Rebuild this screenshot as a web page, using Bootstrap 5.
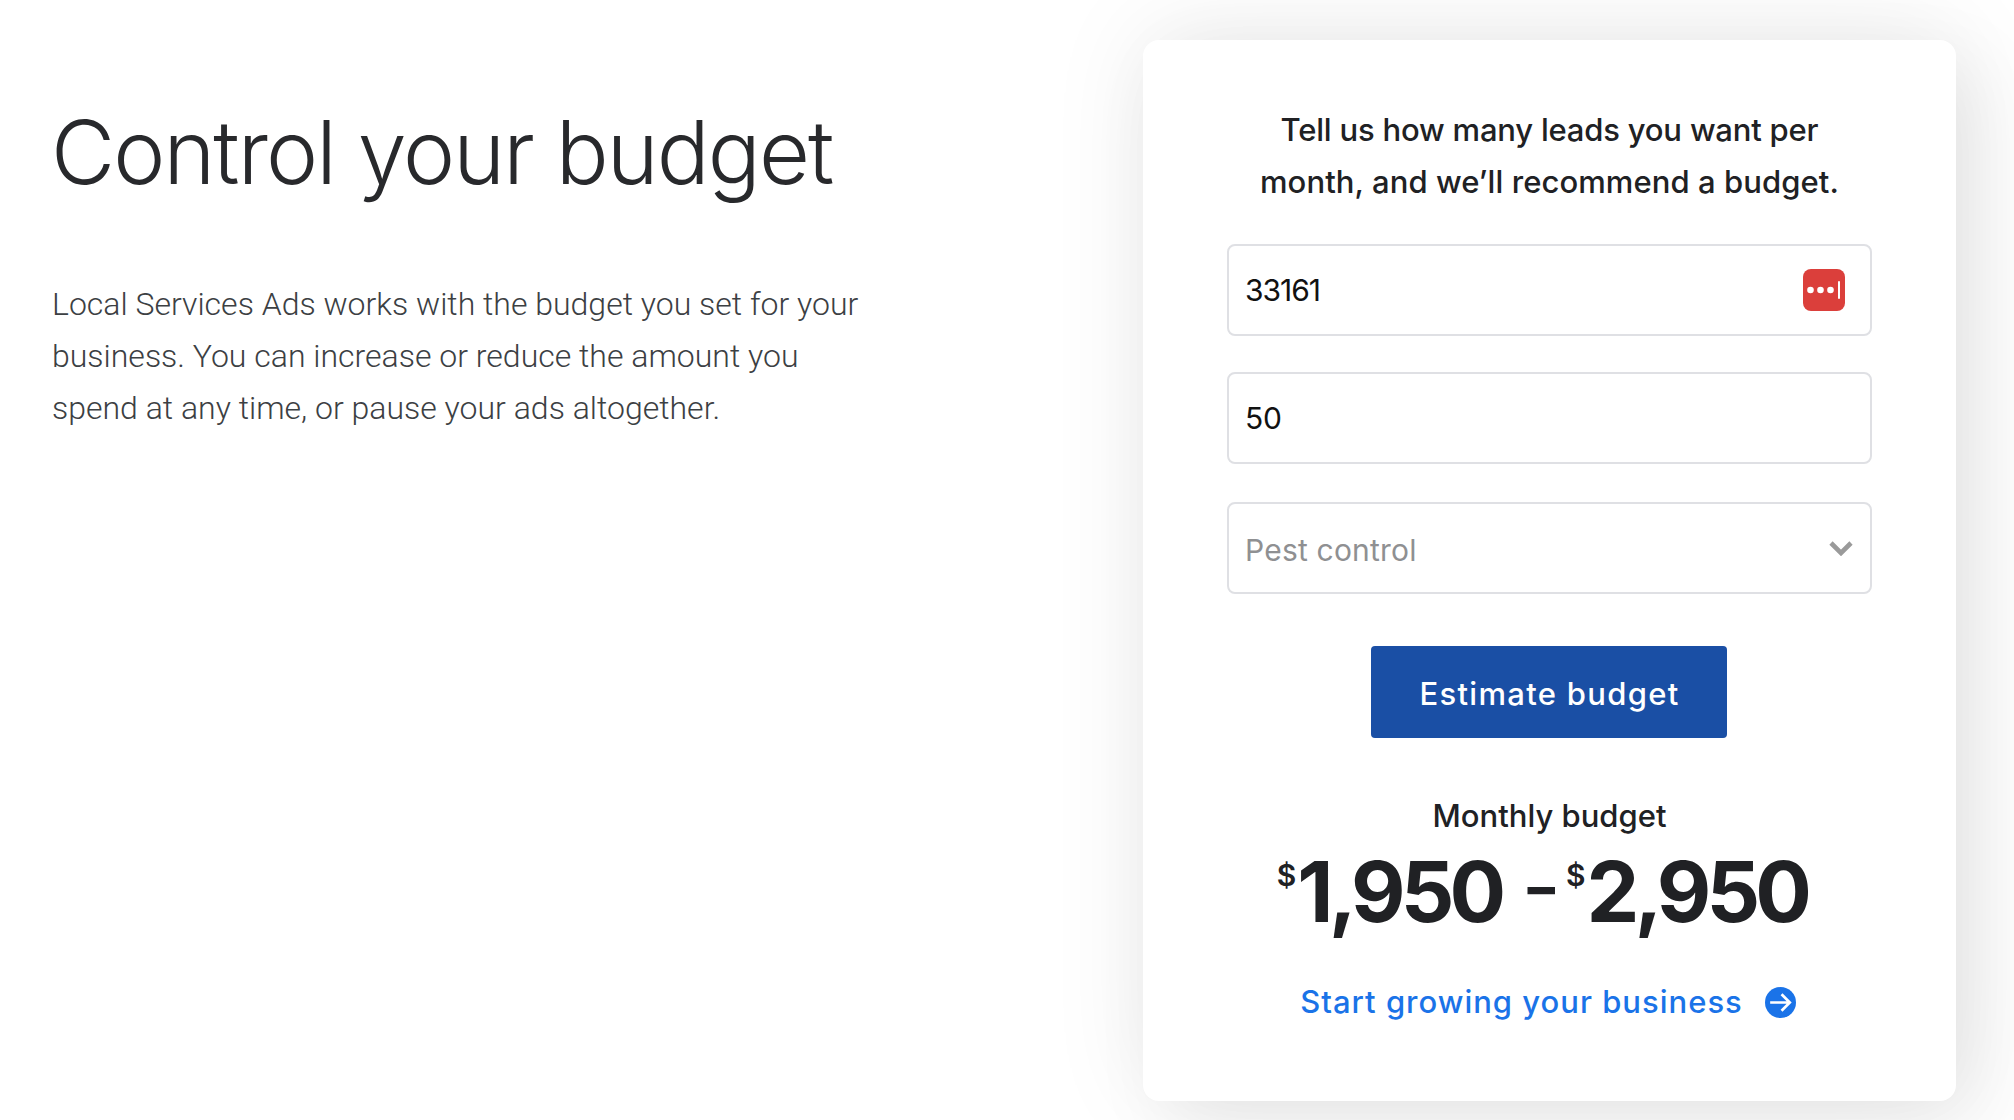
<!doctype html>
<html lang="en">
<head>
<meta charset="utf-8">
<title>Control your budget</title>
<link href="https://cdn.jsdelivr.net/npm/bootstrap@5.3.0/dist/css/bootstrap.min.css" rel="stylesheet">
<style>
html,body{height:1120px;overflow:hidden;background:#fff}
.stage{height:1120px;padding:40px 58px 20px 52px}
.intro{width:1091px;flex:none;padding-top:58px}
.headline{font-family:Inter,sans-serif;font-weight:300;font-size:88px;line-height:108px;color:#28292c;letter-spacing:-1.9px;margin:0 0 72px -1px;white-space:nowrap}
.copy{font-family:Roboto,sans-serif;font-weight:300;font-size:32px;line-height:52px;color:#3c4043;margin:0;width:840px}
.panel{width:813px;height:1061px;border-radius:16px;background:#fff;box-shadow:0 -8px 100px rgba(0,0,0,.08),24px 24px 80px rgba(0,0,0,.07);padding:64px 84px 0;border:0}
.ask{font-family:Inter,sans-serif;font-weight:550;font-size:31px;line-height:52px;color:#202124;text-align:center;letter-spacing:-.2px;margin:0 0 36px}
.ask-second{letter-spacing:.08px}
.field{height:92px;border:2px solid #dfe0e4;border-radius:8px;padding:0 16px;font-family:Inter,sans-serif;font-size:30px;color:#111;letter-spacing:-.3px}
.field-zip{margin-bottom:36px}
.field-qty{margin-bottom:38px}
.zip{letter-spacing:-1px}
.field-last{color:#8f9092;margin-bottom:52px;font-weight:400;letter-spacing:.2px}
.field-last>span{padding-top:5px}
.keybtn{width:42px;height:42px;border-radius:8px;background:#db3f3b;margin-right:9px}
.estimate{width:356px;height:92px;background:#1a4fa5;border:0;border-radius:4px;color:#fff;font-family:Inter,sans-serif;font-weight:500;font-size:31px;letter-spacing:1.3px;padding:4px 0 0 2px;margin-left:-2px}
.estimate:hover{background:#1a4fa5;color:#fff}
.mlabel{font-family:Inter,sans-serif;font-weight:500;font-size:31px;line-height:40px;color:#202124;letter-spacing:0;margin:58px 0 0}
.amount{font-family:Inter,sans-serif;font-weight:700;font-size:84px;line-height:100px;color:#202124;letter-spacing:-4.8px;margin:6px 0 0;padding-right:15px}
.amount sup{font-size:30px;font-weight:600;top:-1.2em;letter-spacing:-1px;margin-right:2px}
.amount .dash{font-size:55px;margin:0 11px 0 26px;font-weight:800;letter-spacing:0;vertical-align:.28em;line-height:0}
.grow{font-family:Inter,sans-serif;font-weight:500;font-size:31px;color:#1a73e8;letter-spacing:1px;text-decoration:none;margin-top:38px;gap:22px;line-height:44px;padding-right:3px}
</style>
</head>
<body>
<main class="stage d-flex">
  <section class="intro">
    <h1 class="headline">Control your budget</h1>
    <p class="copy">Local Services Ads works with the budget you set for your business. You can increase or reduce the amount you spend at any time, or pause your ads altogether.</p>
  </section>
  <section class="panel card">
    <p class="ask">Tell us how many leads you want per<br><span class="ask-second">month, and we’ll recommend a budget.</span></p>
    <div class="field field-zip d-flex align-items-center justify-content-between">
      <span class="zip">33161</span>
      <span class="keybtn d-flex align-items-center justify-content-center">
        <svg width="42" height="42" viewBox="0 0 42 42"><g fill="#fff"><circle cx="7.5" cy="21" r="3.3"/><circle cx="17.5" cy="21" r="3.3"/><circle cx="27.5" cy="21" r="3.3"/><rect x="35" y="12" width="2" height="18" rx="1"/></g></svg>
      </span>
    </div>
    <div class="field field-qty d-flex align-items-center">50</div>
    <div class="field field-last d-flex align-items-center justify-content-between">
      <span>Pest control</span>
      <svg width="26" height="16" viewBox="0 0 26 16"><path d="M3 3l10 10 10-10" fill="none" stroke="#9a9a9a" stroke-width="4.6"/></svg>
    </div>
    <div class="text-center"><button type="button" class="btn estimate">Estimate budget</button></div>
    <p class="mlabel text-center">Monthly budget</p>
    <p class="amount text-center text-nowrap"><sup>$</sup>1,950<span class="dash">–</span><sup>$</sup>2,950</p>
    <a class="grow d-flex align-items-center justify-content-center" href="#">Start growing your business
      <svg width="31" height="31" viewBox="0 0 30 30"><circle cx="15" cy="15" r="15" fill="#1a73e8"/><path d="M5 15h19M16 7l8 8-8 8" fill="none" stroke="#fff" stroke-width="2.6"/></svg>
    </a>
  </section>
</main>
<script src="https://cdn.jsdelivr.net/npm/bootstrap@5.3.0/dist/js/bootstrap.bundle.min.js"></script>
</body>
</html>
